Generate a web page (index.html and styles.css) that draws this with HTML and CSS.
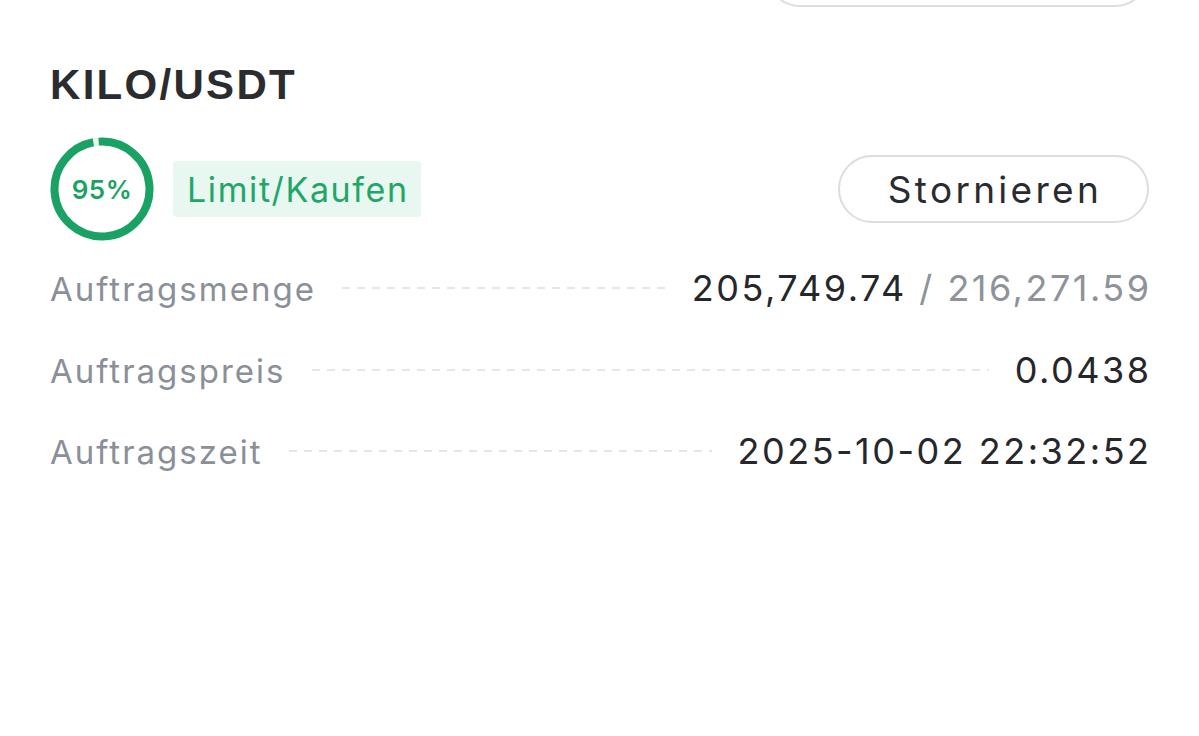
FILE: index.html
```html
<!DOCTYPE html>
<html lang="de">
<head>
    <meta charset="UTF-8">
    <meta name="viewport" content="width=device-width, initial-scale=1.0">
    <title>KILO/USDT Auftrag</title>
    <link rel="stylesheet" href="styles.css">
</head>
<body>
    <div class="page">
        <div class="top-row">
            <button class="pill pill-wide"></button>
        </div>

        <h1 class="pair">KILO/USDT</h1>

        <div class="status-row">
            <div class="progress">
                <svg width="104" height="104" viewBox="0 0 104 104">
                    <circle cx="52" cy="52" r="47.5" fill="none" stroke="#e7f6ee" stroke-width="8"/>
                    <circle cx="52" cy="52" r="47.5" fill="none" stroke="#1aa265" stroke-width="8"
                            stroke-dasharray="292.5 6" transform="rotate(-94 52 52)"/>
                </svg>
                <span class="progress-text">95%</span>
            </div>
            <span class="tag">Limit/Kaufen</span>
            <button class="pill pill-cancel">Stornieren</button>
        </div>

        <div class="details">
            <div class="row">
                <span class="label">Auftragsmenge</span>
                <span class="dashes"></span>
                <span class="value">205,749.74 <span class="muted">/ 216,271.59</span></span>
            </div>
            <div class="row">
                <span class="label">Auftragspreis</span>
                <span class="dashes"></span>
                <span class="value">0.0438</span>
            </div>
            <div class="row">
                <span class="label">Auftragszeit</span>
                <span class="dashes"></span>
                <span class="value">2025-10-02 22:32:52</span>
            </div>
        </div>
    </div>
</body>
</html>
```

FILE: styles.css
```css
* {
    margin: 0;
    padding: 0;
    box-sizing: border-box;
}

body {
    background: #ffffff;
    font-family: 'Inter', 'Noto Sans', sans-serif;
    color: #232428;
    overflow: hidden;
}

.page {
    padding: 0 50px;
}

.top-row {
    display: flex;
    justify-content: flex-end;
}

.pill {
    background: #ffffff;
    border: 2px solid #dcdddf;
    border-radius: 40px;
    font-family: 'Inter', 'Noto Sans', sans-serif;
    color: #2a2b2f;
}

.pill-wide {
    width: 383px;
    height: 68px;
    margin-top: -61px;
}

.pair {
    margin-top: 54px;
    font-family: 'Liberation Sans', Arial, sans-serif;
    font-weight: 700;
    font-size: 42px;
    line-height: 48px;
    letter-spacing: 2.3px;
    color: #2b2c30;
}

.status-row {
    display: flex;
    align-items: center;
    margin-top: 28px;
}

.progress {
    position: relative;
    width: 104px;
    height: 104px;
}

.progress svg {
    display: block;
}

.progress-text {
    position: absolute;
    inset: 0;
    display: flex;
    align-items: center;
    justify-content: center;
    font-size: 26px;
    font-weight: 600;
    letter-spacing: 0.5px;
    color: #1aa265;
}

.tag {
    margin-left: 19px;
    height: 56px;
    padding: 0 12px 0 14px;
    display: flex;
    align-items: center;
    background: #e8f7ef;
    border-radius: 4px;
    font-size: 34px;
    letter-spacing: 1.6px;
    color: #1fa76a;
}

.pill-cancel {
    margin-left: auto;
    width: 311px;
    height: 68px;
    font-size: 37px;
    letter-spacing: 3.3px;
    text-indent: 3px;
}

.details {
    margin-top: 27px;
    display: flex;
    flex-direction: column;
    gap: 41.5px;
}

.row {
    display: flex;
    align-items: baseline;
    height: 40px;
    line-height: 40px;
}

.label {
    font-size: 33px;
    letter-spacing: 2px;
    color: #8a8f98;
}

.dashes {
    flex: 1;
    align-self: center;
    height: 2px;
    margin: 0 26px;
    background: repeating-linear-gradient(90deg, #e4e6e9 0 8px, transparent 8px 15px);
}

.value {
    font-size: 36px;
    letter-spacing: 2.5px;
    margin-right: -2.5px;
    color: #26272b;
}

.muted {
    color: #8e939b;
}
```
